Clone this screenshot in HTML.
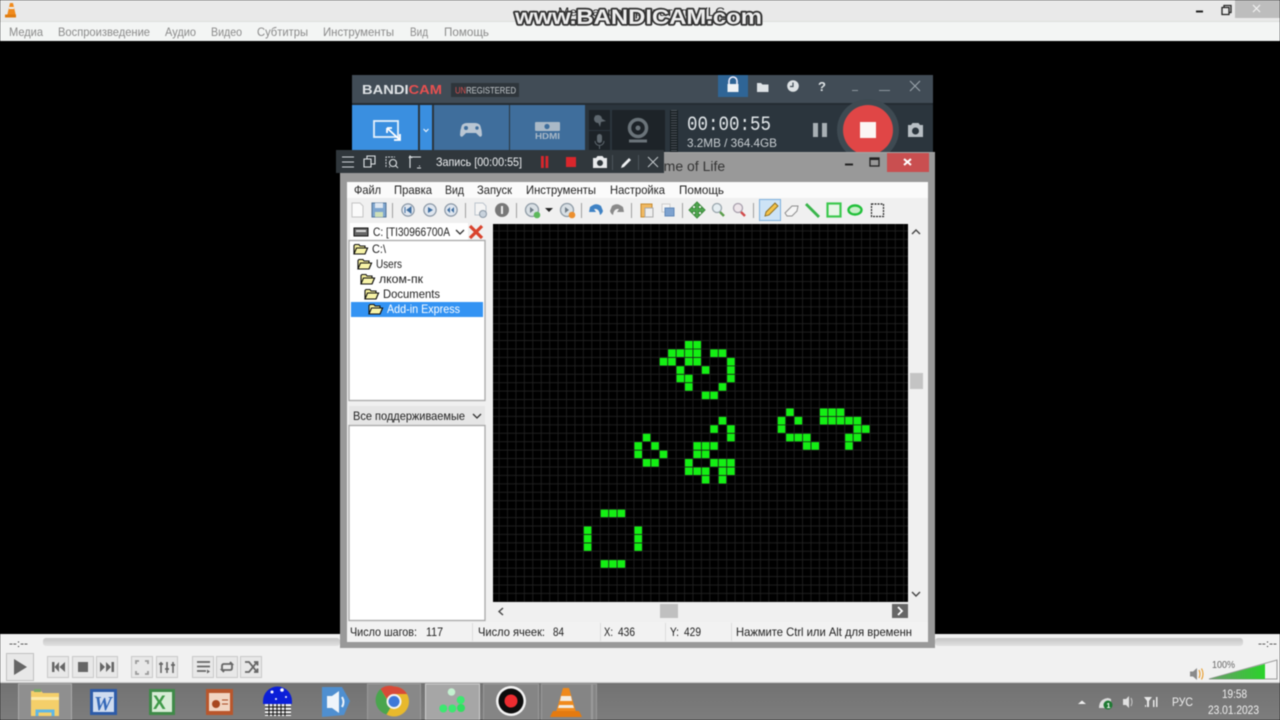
<!DOCTYPE html>
<html><head><meta charset="utf-8"><style>
html,body{margin:0;padding:0;background:#000;width:1280px;height:720px;overflow:hidden}
svg{display:block;filter:blur(.5px)}
text{font-family:"Liberation Sans","Noto Sans CJK SC",sans-serif;font-size:12px}
</style></head><body>
<svg xmlns="http://www.w3.org/2000/svg" width="1280" height="720" viewBox="0 0 1280 720">
<defs>
<linearGradient id="seek" x1="0" y1="0" x2="0" y2="1"><stop offset="0" stop-color="#c4c4c4"/><stop offset="1" stop-color="#e2e2e2"/></linearGradient>
<linearGradient id="tb" x1="0" y1="0" x2="0" y2="1"><stop offset="0" stop-color="#727272"/><stop offset="1" stop-color="#7d7d7d"/></linearGradient>
<linearGradient id="vol" x1="0" y1="0" x2="1" y2="0"><stop offset="0" stop-color="#6a9a6a"/><stop offset="1" stop-color="#2ad32a"/></linearGradient>
<pattern id="grid" x="634.4" y="341" width="8.43" height="8.43" patternUnits="userSpaceOnUse"><path d="M8 0V8.43M0 8H8.43" stroke="#222222" stroke-width=".8" fill="none"/></pattern>
<symbol id="fold" viewBox="0 0 15 12" overflow="visible"><path d="M1 11V2.5L2 1.5H6L7 3H12V5H14.5L12 11Z" fill="#f4ee9a" stroke="#111" stroke-width="1.1"/><path d="M1 11L3.5 5H14.5L12 11Z" fill="#f8f4a8" stroke="#111" stroke-width="1.1"/></symbol>
<symbol id="tbtn" viewBox="0 0 22 22" overflow="visible"><rect x=".5" y=".5" width="21" height="21" fill="#e8e8e8" stroke="#c8c8c8"/></symbol>
<symbol id="circ" viewBox="0 0 16 16" overflow="visible"><circle cx="8" cy="8" r="7" fill="#dfe6ef" stroke="#8a97a5" stroke-width="1.4"/></symbol>
</defs>

<!-- VLC window top -->
<rect width="1280" height="720" fill="#000"/>
<rect width="1280" height="21" fill="#e9e9e9"/>
<rect y="21" width="1280" height="1" fill="#dcdfde"/>
<rect y="22" width="1280" height="19" fill="#f3f5f4"/>
<path d="M10 3h3l3 13h-9z" fill="#f08a1c"/><rect x="5" y="14.5" width="11" height="3" fill="#e07c10"/><rect x="9" y="7" width="5" height="2" fill="#eee"/>
<text x="558" y="16" fill="#222" font-size="12" textLength="167" lengthAdjust="spacingAndGlyphs">Медиапроигрыватель VLC</text>
<g fill="#8a8a8a" style="font-size:11.5px">
<text x="9" y="36" textLength="34" lengthAdjust="spacingAndGlyphs">Медиа</text>
<text x="58" y="36" textLength="92" lengthAdjust="spacingAndGlyphs">Воспроизведение</text>
<text x="165" y="36" textLength="31" lengthAdjust="spacingAndGlyphs">Аудио</text>
<text x="211" y="36" textLength="31" lengthAdjust="spacingAndGlyphs">Видео</text>
<text x="257" y="36" textLength="51" lengthAdjust="spacingAndGlyphs">Субтитры</text>
<text x="323" y="36" textLength="71" lengthAdjust="spacingAndGlyphs">Инструменты</text>
<text x="410" y="36" textLength="18" lengthAdjust="spacingAndGlyphs">Вид</text>
<text x="444" y="36" textLength="45" lengthAdjust="spacingAndGlyphs">Помощь</text>
</g>
<path d="M1196 11.5h7" stroke="#222" stroke-width="2"/>
<path d="M1222 7.5h7v7h-7z M1224 7.5v-2h7v7h-2" fill="none" stroke="#222" stroke-width="1.3"/>
<rect x="1235" y="0" width="45" height="18" fill="#bdbdbd"/>
<path d="M1253 5l7 7M1260 5l-7 7" stroke="#f2f2f2" stroke-width="1.2"/>
<text x="515" y="24" textLength="247" lengthAdjust="spacingAndGlyphs" style="font-size:21px;font-weight:bold;paint-order:stroke;stroke:#333;stroke-width:3.4px;stroke-linejoin:round" fill="#eeeeee">www.BANDICAM.com</text>

<!-- Bandicam window -->
<rect x="352" y="75" width="581" height="28" fill="#414c56"/>
<rect x="352" y="103" width="581" height="60" fill="#2b353d"/>
<rect x="352" y="103" width="581" height="2" fill="#242c33"/>
<text x="362" y="94" textLength="80" lengthAdjust="spacingAndGlyphs" style="font-size:13px;font-weight:bold" fill="#dfe3e6">BANDI<tspan fill="#e85050">CAM</tspan></text>
<rect x="451" y="83" width="68" height="14" fill="#2e353b"/>
<text x="455" y="93.500" textLength="61" lengthAdjust="spacingAndGlyphs" style="font-size:9px" fill="#c5cacd"><tspan fill="#d85050">UN</tspan>REGISTERED</text>
<rect x="718" y="75" width="30" height="22" fill="#2f6596"/>
<path d="M729 84v-3a4 4 0 0 1 8 0v3" fill="none" stroke="#eef" stroke-width="1.6"/><rect x="727.500" y="84" width="11" height="8" fill="#eef2f5"/>
<path d="M757 83h4l1.500 1.500h6V92h-11.500z" fill="#dde2e5"/>
<circle cx="793" cy="86" r="5.800" fill="#dde2e5"/><path d="M793 82.500V86.500H790" fill="none" stroke="#414c56" stroke-width="1.2"/>
<text x="818" y="91" style="font-size:13px;font-weight:bold" fill="#dde2e5">?</text>
<path d="M852 90.500h6M879 90.500h11" stroke="#8c969e" stroke-width="1"/>
<path d="M910 81l10 10M920 81l-10 10" stroke="#9aa4ab" stroke-width="1.100"/>
<rect x="352" y="105" width="66" height="47" fill="#3a8fe0"/>
<rect x="374" y="121" width="24" height="16" fill="none" stroke="#e6f1fb" stroke-width="1.800"/>
<path d="M387 128l13 12M394 140h6v-6M387 128v5M387 128h5" fill="none" stroke="#fff" stroke-width="1.800"/>
<rect x="420" y="105" width="12" height="47" fill="#3a8fe0"/>
<path d="M423.500 129l2.500 2.500 2.500-2.500" stroke="#eaf3fc" stroke-width="1.200" fill="none"/>
<rect x="434" y="105" width="75" height="47" fill="#3f6e9c"/>
<rect x="510" y="105" width="75" height="47" fill="#3f6e9c"/>
<path d="M462 125q2-2 5-2h8q3 0 5 2 2 5 2 10-1 3-3 1l-3-3h-10l-3 3q-2 2-3-1 0-5 2-10z" fill="#b9c6d3"/>
<circle cx="466" cy="128" r="2" fill="#3f6e9c"/><circle cx="477" cy="128" r="1.700" fill="#3f6e9c"/>
<rect x="535" y="122" width="25" height="9" rx="1" fill="#aab9c7"/><circle cx="547" cy="126.500" r="2.600" fill="#3f6e9c"/>
<text x="535" y="139" textLength="25" lengthAdjust="spacingAndGlyphs" style="font-size:8px;font-weight:bold" fill="#aab9c7">HDMI</text>
<rect x="589" y="110" width="21" height="20" fill="#1d2328"/><rect x="589" y="131" width="21" height="21" fill="#1d2328"/>
<path d="M595 115l11 6-5 1-1 5z" fill="#5f686f"/><circle cx="598" cy="119" r="4" fill="#5f686f"/>
<rect x="597" y="134" width="5" height="9" rx="2.500" fill="#5f686f"/><path d="M595 141a4.500 4.500 0 0 0 9 0M599.500 146v3" stroke="#5f686f" fill="none"/>
<rect x="612" y="110" width="53" height="42" fill="#1d2328"/>
<circle cx="638" cy="128" r="8.500" fill="none" stroke="#6a7379" stroke-width="3.500"/><circle cx="638" cy="128" r="2.500" fill="#6a7379"/><path d="M629 141h18" stroke="#6a7379" stroke-width="3"/>
<rect x="670" y="110" width="8" height="42" fill="#191f23"/>
<g stroke="#4a5359" stroke-dasharray="1 1.500" stroke-width="6"><path d="M674 110V152"/></g>
<text x="687" y="130" textLength="84" lengthAdjust="spacingAndGlyphs" style="font-family:'Liberation Mono',monospace;font-size:20px" fill="#e2e7ea">00:00:55</text>
<text x="687" y="147" textLength="90" lengthAdjust="spacingAndGlyphs" style="font-size:12px" fill="#c8ced2">3.2MB / 364.4GB</text>
<rect x="813" y="123" width="5" height="14" fill="#a8afb4"/><rect x="822" y="123" width="5" height="14" fill="#a8afb4"/>
<circle cx="868" cy="130" r="31" fill="#3e4a52"/><circle cx="868" cy="130" r="25" fill="#e04646"/>
<rect x="860" y="122" width="16" height="16" fill="#fbf6f4"/>
<path d="M908 125h3l1.500-2h6l1.500 2h3v12h-15z" fill="#b8bfc4"/><circle cx="915.500" cy="131" r="3.500" fill="#2b353d"/>

<!-- Game of Life window -->
<rect x="340" y="152" width="595" height="496" fill="#999999"/>
<rect x="340" y="152" width="595" height="1" fill="#a5a5a5"/>
<text x="645" y="171" style="font-size:14px" fill="#333">Game of Life</text>
<path d="M845 164.500h8" stroke="#222" stroke-width="2"/>
<rect x="870" y="158" width="9" height="8" fill="none" stroke="#222" stroke-width="1.300"/><path d="M870 159h9" stroke="#222" stroke-width="2"/>
<rect x="887" y="153" width="42" height="19" fill="#c94f50"/>
<path d="M904 159l7 6M911 159l-7 6" stroke="#fff" stroke-width="2"/>
<rect x="347" y="182" width="581" height="460" fill="#f0f0f0"/>
<rect x="347" y="182" width="581" height="16" fill="#fbfbfb"/>
<g fill="#1e1e1e" style="font-size:12px">
<text x="354" y="194" textLength="27" lengthAdjust="spacingAndGlyphs">Файл</text>
<text x="394" y="194" textLength="38" lengthAdjust="spacingAndGlyphs">Правка</text>
<text x="445" y="194" textLength="19" lengthAdjust="spacingAndGlyphs">Вид</text>
<text x="477" y="194" textLength="35" lengthAdjust="spacingAndGlyphs">Запуск</text>
<text x="526" y="194" textLength="70" lengthAdjust="spacingAndGlyphs">Инструменты</text>
<text x="610" y="194" textLength="55" lengthAdjust="spacingAndGlyphs">Настройка</text>
<text x="679" y="194" textLength="45" lengthAdjust="spacingAndGlyphs">Помощь</text>
</g>
<!-- toolbar -->
<g stroke="#a0a0a0" stroke-width="1"><path d="M392.500 203v15M465.500 203v15M516.500 203v15M581.500 203v15M631.500 203v15M682.500 203v15M753.500 203v15"/></g>
<path d="M352 203h8l3 3v11h-11z" fill="#fafafa" stroke="#c4c4c4"/>
<rect x="372" y="203" width="14" height="14" fill="#7fa6cf" stroke="#54769a"/><rect x="375" y="203" width="8" height="5" fill="#dfe8f2"/><rect x="375" y="212" width="8" height="5" fill="#cfe0b8"/>
<use href="#circ" x="401" y="203" width="14" height="14"/><use href="#circ" x="423" y="203" width="14" height="14"/><use href="#circ" x="444" y="203" width="14" height="14"/>
<path d="M405 207v6M411 207v6l-4-3z" stroke="#3f6ea0" fill="#3f6ea0"/>
<path d="M428 207l5 3-5 3z" fill="#3f6ea0"/>
<path d="M454 207v6l-3-3zM450 207v6l-3-3z" fill="#3f6ea0"/>
<path d="M475 203h8l3 3v9h-11z" fill="#f4f4f4" stroke="#bcc4cc"/><circle cx="483" cy="214" r="3.500" fill="#c8d2dc" stroke="#8a97a5"/>
<circle cx="502" cy="210" r="7" fill="#777"/><rect x="501" y="206" width="2" height="8" fill="#eee"/>
<circle cx="532" cy="210" r="6.500" fill="#d8dfe4" stroke="#8d9aa5" stroke-width="1.300"/><path d="M530 207l4 3-4 3z" fill="#6d7a85"/><circle cx="537" cy="215" r="3.300" fill="#5cb85c"/>
<path d="M545 208h8l-4 4z" fill="#222"/>
<circle cx="567" cy="210" r="6.500" fill="#d8dfe4" stroke="#8d9aa5" stroke-width="1.300"/><path d="M565 207l4 3-4 3z" fill="#6d7a85"/><circle cx="572" cy="215" r="3.300" fill="#ec8f2e"/>
<path d="M590 207q6-5 11-1l2 5q-1 3-3 4-1-7-6-6l2 3h-7z" fill="#3f82c4"/>
<path d="M623 207q-6-5-11-1l-2 5q1 3 3 4 1-7 6-6l-2 3h7z" fill="#8a8a8a"/>
<rect x="641" y="204" width="11" height="13" fill="#f0b860" stroke="#c58a30"/><rect x="645" y="208" width="8" height="9" fill="#eee" stroke="#aaa"/>
<rect x="662" y="204" width="8" height="8" fill="#f4f4f4" stroke="#ccc"/><rect x="665" y="208" width="9" height="8" fill="#7ea2cf" stroke="#6088b8"/>
<path d="M697 202l3.500 3.500h-2v3h3v-2l3.500 3.500-3.500 3.500v-2h-3v3h2L697 218l-3.500-3.500h2v-3h-3v2L689 210l3.500-3.500v2h3v-3h-2z" fill="#4fa74f" stroke="#3d8b3d"/>
<circle cx="717" cy="208" r="4.500" fill="#e5eef2" stroke="#9aa6ad" stroke-width="1.300"/><path d="M720 212l4 4" stroke="#5a9c4a" stroke-width="2.400"/>
<circle cx="738" cy="208" r="4.500" fill="#eee5ea" stroke="#a8a0ad" stroke-width="1.300"/><path d="M741 212l4 4" stroke="#d04a4a" stroke-width="2.400"/>
<rect x="759.500" y="199.500" width="21" height="21" fill="#cde3f6" stroke="#7fb0de"/>
<path d="M765 216l1-4 9-9 3 3-9 9z" fill="#f2c24a" stroke="#8a6a1a" stroke-width=".9"/>
<path d="M785 213l7-7h6l-1 5-5 5h-5z" fill="#f5f5f5" stroke="#8d8d8d"/>
<path d="M806 204l13 13" stroke="#39b54a" stroke-width="2.800"/>
<rect x="827.500" y="203.500" width="13" height="13" fill="#e8f5e8" stroke="#3cc84e" stroke-width="2.200"/>
<ellipse cx="855" cy="210" rx="6.500" ry="4.500" fill="#c8eec8" stroke="#22c03a" stroke-width="2.400"/>
<rect x="871.500" y="204" width="12" height="12.500" fill="none" stroke="#222" stroke-width="1.200" stroke-dasharray="2 1"/>

<!-- left pane -->
<rect x="350" y="223" width="118" height="17" fill="#fff"/>
<rect x="354" y="228" width="14" height="8" fill="#666" stroke="#111"/><rect x="356" y="230" width="10" height="2" fill="#ddd"/>
<text x="373" y="236" textLength="77" lengthAdjust="spacingAndGlyphs" fill="#1e1e1e">C: [TI30966700A</text>
<path d="M456 230l4 4 4-4" fill="none" stroke="#333" stroke-width="1.300"/>
<path d="M470 226l12 12M482 226l-12 12" stroke="#d9432d" stroke-width="3.200"/>
<rect x="349" y="240.500" width="136" height="160" fill="#fff" stroke="#a8a8a8" stroke-width="1.300"/>
<use href="#fold" x="353" y="243" width="15" height="12"/>
<use href="#fold" x="357" y="258" width="15" height="12"/>
<use href="#fold" x="360" y="273" width="15" height="12"/>
<use href="#fold" x="364" y="288" width="15" height="12"/>
<rect x="351" y="302" width="132" height="15" fill="#3393f3"/>
<use href="#fold" x="368" y="303" width="15" height="12"/>
<g fill="#1e1e1e">
<text x="372" y="253" textLength="14" lengthAdjust="spacingAndGlyphs">C:\</text>
<text x="376" y="268" textLength="26" lengthAdjust="spacingAndGlyphs">Users</text>
<text x="379" y="283" textLength="44" lengthAdjust="spacingAndGlyphs">лком-пк</text>
<text x="383" y="298" textLength="57" lengthAdjust="spacingAndGlyphs">Documents</text>
</g>
<text x="387" y="313" textLength="73" lengthAdjust="spacingAndGlyphs" fill="#fff">Add-in Express</text>
<rect x="349" y="406" width="136" height="19" fill="#e6e6e6"/>
<text x="353" y="420" textLength="112" lengthAdjust="spacingAndGlyphs" fill="#1e1e1e">Все поддерживаемые</text>
<path d="M473 414l4 4 4-4" fill="none" stroke="#333" stroke-width="1.300"/>
<rect x="349" y="425.500" width="136" height="195" fill="#fff" stroke="#a8a8a8" stroke-width="1.300"/>

<!-- canvas -->
<rect x="493" y="224" width="415" height="378" fill="#000"/>
<rect x="493" y="224" width="415" height="378" fill="url(#grid)"/>
<g transform="translate(634.4 341) scale(8.43)" fill="#14ef14">
<path d="M6 0h.9v.9h-.9zM7 0h.9v.9h-.9z
M4 1h.9v.9h-.9zM5 1h.9v.9h-.9zM6 1h.9v.9h-.9zM7 1h.9v.9h-.9zM9 1h.9v.9h-.9zM10 1h.9v.9h-.9z
M3 2h.9v.9h-.9zM4 2h.9v.9h-.9zM6 2h.9v.9h-.9zM7 2h.9v.9h-.9zM11 2h.9v.9h-.9z
M5 3h.9v.9h-.9zM8 3h.9v.9h-.9zM11 3h.9v.9h-.9z
M5 4h.9v.9h-.9zM6 4h.9v.9h-.9zM11 4h.9v.9h-.9z
M6 5h.9v.9h-.9zM10 5h.9v.9h-.9z
M8 6h.9v.9h-.9zM9 6h.9v.9h-.9z
M10 9h.9v.9h-.9z
M9 10h.9v.9h-.9zM11 10h.9v.9h-.9z
M1 11h.9v.9h-.9zM11 11h.9v.9h-.9z
M0 12h.9v.9h-.9zM2 12h.9v.9h-.9zM7 12h.9v.9h-.9zM8 12h.9v.9h-.9zM9 12h.9v.9h-.9z
M0 13h.9v.9h-.9zM3 13h.9v.9h-.9zM7 13h.9v.9h-.9zM8 13h.9v.9h-.9z
M1 14h.9v.9h-.9zM2 14h.9v.9h-.9zM6 14h.9v.9h-.9zM9 14h.9v.9h-.9zM10 14h.9v.9h-.9zM11 14h.9v.9h-.9z
M6 15h.9v.9h-.9zM7 15h.9v.9h-.9zM8 15h.9v.9h-.9zM10 15h.9v.9h-.9zM11 15h.9v.9h-.9z
M8 16h.9v.9h-.9zM10 16h.9v.9h-.9z
M18 8h.9v.9h-.9zM22 8h.9v.9h-.9zM23 8h.9v.9h-.9zM24 8h.9v.9h-.9z
M17 9h.9v.9h-.9zM19 9h.9v.9h-.9zM22 9h.9v.9h-.9zM23 9h.9v.9h-.9zM24 9h.9v.9h-.9zM25 9h.9v.9h-.9zM26 9h.9v.9h-.9z
M17 10h.9v.9h-.9zM26 10h.9v.9h-.9zM27 10h.9v.9h-.9z
M18 11h.9v.9h-.9zM19 11h.9v.9h-.9zM20 11h.9v.9h-.9zM25 11h.9v.9h-.9zM26 11h.9v.9h-.9z
M20 12h.9v.9h-.9zM21 12h.9v.9h-.9zM25 12h.9v.9h-.9z
M-4 20h.9v.9h-.9zM-3 20h.9v.9h-.9zM-2 20h.9v.9h-.9z
M-6 22h.9v.9h-.9zM0 22h.9v.9h-.9zM-6 23h.9v.9h-.9zM0 23h.9v.9h-.9zM-6 24h.9v.9h-.9zM0 24h.9v.9h-.9z
M-4 26h.9v.9h-.9zM-3 26h.9v.9h-.9zM-2 26h.9v.9h-.9z"/>
</g>
<!-- scrollbars -->
<path d="M912 234l4-4 4 4M912 592l4 4 4-4" fill="none" stroke="#444" stroke-width="1.400"/>
<rect x="910" y="373" width="13" height="16" fill="#c4c4c4"/>
<path d="M503 608l-4 3.500 4 3.500" fill="none" stroke="#444" stroke-width="1.400"/>
<rect x="660" y="604" width="18" height="14" fill="#c0c0c0"/>
<rect x="892" y="604" width="16" height="14" fill="#666"/>
<path d="M898 607l4 4-4 4" fill="none" stroke="#fff" stroke-width="1.800"/>
<!-- status -->
<rect x="347" y="622" width="581" height="20" fill="#f2f2f2"/>
<path d="M472.500 623v18M600.500 623v18M665.500 623v18M731.500 623v18" stroke="#dcdcdc"/>
<g fill="#1e1e1e" style="font-size:11.5px">
<text x="350" y="636" textLength="67" lengthAdjust="spacingAndGlyphs">Число шагов:</text>
<text x="426" y="636" textLength="17" lengthAdjust="spacingAndGlyphs">117</text>
<text x="478" y="636" textLength="67" lengthAdjust="spacingAndGlyphs">Число ячеек:</text>
<text x="553" y="636" textLength="11" lengthAdjust="spacingAndGlyphs">84</text>
<text x="604" y="636" textLength="9" lengthAdjust="spacingAndGlyphs">X:</text>
<text x="618" y="636" textLength="17" lengthAdjust="spacingAndGlyphs">436</text>
<text x="670" y="636" textLength="9" lengthAdjust="spacingAndGlyphs">Y:</text>
<text x="684" y="636" textLength="17" lengthAdjust="spacingAndGlyphs">429</text>
<text x="736" y="636" textLength="176" lengthAdjust="spacingAndGlyphs">Нажмите Ctrl или Alt для временн</text>
</g>

<!-- Recording bar (above windows) -->
<rect x="336" y="150" width="328" height="23" fill="#30373c"/>
<path d="M342 157h12M342 162h12M342 167h12" stroke="#cfd4d8" stroke-width="1.100"/>
<path d="M364 159h7v8h-7zM367 159v-3h8v8h-4" fill="none" stroke="#dfe3e6" stroke-width="1.100"/>
<path d="M386 167v-10h9M390 167h-1" fill="none" stroke="#cfd4d8" stroke-dasharray="2 1"/><circle cx="393" cy="163" r="3.500" fill="none" stroke="#dfe3e6" stroke-width="1.100"/><path d="M395.500 165.500l2.500 2.500" stroke="#dfe3e6"/>
<path d="M410 168v-11h11M421 157v0M409 158l1-2 2 2M420 166h-1M417 168h4" fill="none" stroke="#dfe3e6" stroke-width="1.100"/>
<text x="436" y="166" textLength="86" lengthAdjust="spacingAndGlyphs" fill="#eef0f2">Запись [00:00:55]</text>
<rect x="541" y="156" width="2.800" height="12" fill="#d9262c"/><rect x="545.500" y="156" width="2.800" height="12" fill="#d9262c"/>
<rect x="566" y="157" width="10" height="10" fill="#d9262c"/>
<path d="M593 158h3l1.500-2h5l1.500 2h3v10h-14z" fill="#e8eaec"/><circle cx="600" cy="163" r="3" fill="#30373c"/>
<path d="M621 168l1-3 7-7 2 2-7 7z" fill="#eef0f2"/>
<path d="M612.500 155v15M638.500 155v15" stroke="#4c555b"/>
<path d="M648 157l10 10M658 157l-10 10" stroke="#c8cdd1" stroke-width=".9"/>

<!-- Player controls -->
<rect y="634" width="340" height="48" fill="#f1f1f1"/>
<rect x="935" y="634" width="345" height="48" fill="#f1f1f1"/>
<rect x="340" y="648" width="595" height="34" fill="#f1f1f1"/>
<rect x="43" y="638" width="297" height="8" rx="3" fill="url(#seek)"/>
<rect x="935" y="638" width="308" height="8" rx="3" fill="url(#seek)"/>
<text x="9" y="647" textLength="19" lengthAdjust="spacingAndGlyphs" style="font-size:10px" fill="#333">--:--</text>
<text x="1258" y="647" textLength="19" lengthAdjust="spacingAndGlyphs" style="font-size:10px" fill="#333">--:--</text>
<rect x="6.500" y="653.500" width="27" height="27" fill="#e8e8e8" stroke="#c0c0c0"/>
<path d="M14 659l13 8-13 8z" fill="#666"/>
<use href="#tbtn" x="47" y="656" width="22" height="22"/><use href="#tbtn" x="72" y="656" width="22" height="22"/><use href="#tbtn" x="96" y="656" width="22" height="22"/>
<use href="#tbtn" x="131" y="656" width="22" height="22"/><use href="#tbtn" x="156" y="656" width="22" height="22"/>
<use href="#tbtn" x="192" y="656" width="22" height="22"/><use href="#tbtn" x="216" y="656" width="22" height="22"/><use href="#tbtn" x="240" y="656" width="22" height="22"/>
<path d="M52 662h2.500v10H52zM59 662v10l-4.500-5zM65 662v10l-5.500-5z" fill="#666"/>
<rect x="78" y="662" width="10" height="10" fill="#666"/>
<path d="M100 662v10l5-5zM106 662v10l5-5zM111.500 662h2.500v10h-2.500z" fill="#666"/>
<path d="M136 664v-3h3M148 664v-3h-3M136 671v3h3M148 671v3h-3" fill="none" stroke="#9a9a9a" stroke-width="1.800"/>
<path d="M161 662v11M167 662v11M173 662v11" stroke="#666" stroke-width="1.600"/><path d="M159 664h4M165 669h4M171 665h4" stroke="#666" stroke-width="1.800"/>
<path d="M197 662h13M197 666.500h13M197 671h9" stroke="#666" stroke-width="1.800"/><path d="M207 669.500l3 2-3 2z" fill="#666"/>
<path d="M222 670v-4q0-2 2-2h8l-2-2M232 664v4q0 2-2 2h-8l2 2" fill="none" stroke="#666" stroke-width="1.800"/>
<path d="M245 662l4 0 8 10M245 672h4l8-10M254 662h3.500v3.500M254 672h3.500v-3.500" fill="none" stroke="#666" stroke-width="1.800"/>
<path d="M1190 671.500h3l4-3.500v12l-4-3.500h-3z" fill="#8a8a8a"/><path d="M1199 670q2 4 0 8M1201.500 668.500q3 5.500 0 11" fill="none" stroke="#e89a28" stroke-width="1.100"/>
<text x="1212" y="668" textLength="23" lengthAdjust="spacingAndGlyphs" style="font-size:10px" fill="#666">100%</text>
<path d="M1209 679L1277 660V679z" fill="#f2f2f2" stroke="#999" stroke-width="1"/>
<path d="M1209 679L1265 664V679z" fill="url(#vol)"/>

<!-- Taskbar -->
<rect y="682" width="1280" height="38" fill="url(#tb)"/>
<rect y="682" width="1280" height="1" fill="#cfcfcf"/>
<rect x="18.500" y="684" width="53" height="36" fill="#8f8f8f" stroke="#aaa"/>
<path d="M31 691h10l2 2h16v23H31z" fill="#f4cf6a"/><rect x="31" y="697" width="28" height="3" fill="#fbe9a8"/><path d="M37 716v-5h16v5" fill="none" stroke="#5fb7e6" stroke-width="3"/><rect x="34" y="689" width="7" height="3" fill="#79a86a"/>
<rect x="90" y="689" width="27" height="26" fill="#2d5ba8"/><rect x="93" y="692" width="21" height="20" fill="#cfdcf0"/><text x="94" y="710" style="font-family:'Liberation Serif',serif;font-size:20px;font-weight:bold;font-style:italic" fill="#3468b8">W</text>
<rect x="149" y="689" width="26" height="26" fill="#3f8a48"/><rect x="152" y="692" width="20" height="20" fill="#d8ecd6"/><text x="153" y="709" style="font-size:19px;font-weight:bold" fill="#3f9a48">X</text>
<rect x="206" y="689" width="27" height="26" fill="#b8562c"/><rect x="209" y="693" width="21" height="18" fill="#f1d5c2"/><circle cx="216" cy="704" r="4" fill="#a84820"/><path d="M222 700h6M222 704h6" stroke="#a84820"/>
<path d="M263 701a14.500 14.500 0 0 1 29 0v3h-29z" fill="#0b1fd8"/><circle cx="272" cy="692" r="1.500" fill="#fff"/><circle cx="282" cy="690" r="1.800" fill="#fff"/><circle cx="286" cy="697" r="1" fill="#fff"/><circle cx="276" cy="699" r="1" fill="#fff"/>
<rect x="265" y="704" width="26" height="12" fill="#e8e8e8"/><path d="M265 707h26M265 710.500h26M265 714h26M269 704v12M273 704v12M277 704v12M281 704v12M285 704v12" stroke="#111"/>
<path d="M322 687h20l8 14-6 14-22 2z" fill="#4f8fd0"/><path d="M327 696h5l7-5v22l-7-5h-5z" fill="#eef4fa"/><path d="M342 697q3 5 0 10" fill="none" stroke="#eef4fa" stroke-width="2"/>
<rect x="367.500" y="684" width="53" height="36" fill="#888" stroke="#9a9a9a"/>
<circle cx="394" cy="701.500" r="15" fill="#e8b92c"/>
<path d="M394 686.500a15 15 0 0 1 13 7.500h-13a7.500 7.500 0 0 0-7 5l-6.500-10a15 15 0 0 1 13.500-2.500z" fill="#d84a38"/>
<path d="M380.500 689a15 15 0 0 0 6 25.500l6.500-11-6-4z" fill="#4aa54e"/>
<circle cx="394" cy="701.500" r="7.500" fill="#f4f4f4"/><circle cx="394" cy="701.500" r="5.500" fill="#3f78d8"/>
<rect x="425.500" y="684" width="54" height="36" fill="#a6a6a6" stroke="#cfcfcf"/>
<circle cx="451.500" cy="692" r="3.800" fill="#c4f0d0"/><circle cx="460.700" cy="700" r="4" fill="#3ce870"/><circle cx="443.300" cy="708.500" r="4" fill="#3ce870"/><circle cx="452.300" cy="708.500" r="4" fill="#3ce870"/><circle cx="461" cy="708" r="4" fill="#30e060"/>
<rect x="483.500" y="684" width="55" height="36" fill="#858585" stroke="#9a9a9a"/>
<circle cx="511" cy="701" r="15" fill="#f4f4f4"/><circle cx="511" cy="701" r="12.500" fill="#0d0d0d"/><circle cx="511" cy="701" r="6.500" fill="#ec2c30"/>
<rect x="541.500" y="684" width="50" height="36" fill="#858585" stroke="#9a9a9a"/>
<rect x="592.500" y="684" width="4" height="36" fill="#858585" stroke="#9a9a9a"/>
<path d="M563 688h6l7 24h-20z" fill="#f08a1c"/><path d="M561 696h10l1 5h-12zM559 705h14l1 3h-16z" fill="#f2ece2"/><path d="M553 711h26l3 6h-32z" fill="#e47a10"/>

<!-- Tray -->
<path d="M1078 704l4-3.500 4 3.500z" fill="#eee"/>
<path d="M1099 708q0-9 9-10l3 1v5l-5 0v4z" fill="#dcdcdc"/><circle cx="1108" cy="705" r="4.500" fill="#1f7a33"/><text x="1106.500" y="708" style="font-size:7px;font-weight:bold" fill="#fff">1</text>
<path d="M1123 699h3l3-3v12l-3-3h-3z" fill="#e0e0e0"/><path d="M1131 698q2 4 0 8" fill="none" stroke="#ccc"/>
<path d="M1144 697h8l-3 4v6h-2v-6zM1145 707h1v-2h-1zM1149 707h0M1153 707v-7h1.500v7zM1156 707v-10h1.500v10z" fill="#e8e8e8"/>
<text x="1172" y="706" textLength="21" lengthAdjust="spacingAndGlyphs" style="font-size:11.5px" fill="#f0f0f0">РУС</text>
<text x="1222" y="698" textLength="25" lengthAdjust="spacingAndGlyphs" style="font-size:11.5px" fill="#f0f0f0">19:58</text>
<text x="1208" y="714" textLength="51" lengthAdjust="spacingAndGlyphs" style="font-size:11.5px" fill="#f0f0f0">23.01.2023</text>
</svg>
</body></html>
